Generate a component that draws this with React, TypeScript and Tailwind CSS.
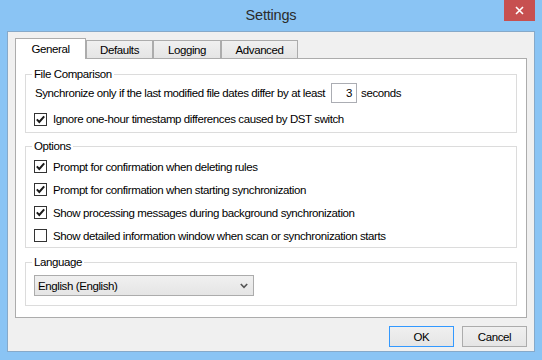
import React from "react";

const txt = "text-[11.5px] tracking-[-0.4px] text-black leading-[16px]";

function Check({ checked }: { checked: boolean }) {
  return (
    <div className="w-[13px] h-[13px] border border-[#333333] bg-white flex items-center justify-center shrink-0">
      {checked && (
        <svg width="11" height="11" viewBox="0 0 11 11">
          <path d="M1.8 5.4 L4.3 8 L9.2 2.4" fill="none" stroke="#1a1a1a" strokeWidth="2" />
        </svg>
      )}
    </div>
  );
}

function Row({ checked, label }: { checked: boolean; label: string }) {
  return (
    <div className="h-[23px] flex items-center">
      <Check checked={checked} />
      <span className={`${txt} ml-[6px]`}>{label}</span>
    </div>
  );
}

function Tab({ label, selected, w }: { label: string; selected?: boolean; w: string }) {
  if (selected) {
    return (
      <div
        className={`${w} h-[21px] -mb-px relative z-10 bg-white border border-b-0 border-[#acacac] flex items-center justify-center pb-[1px]`}
      >
        <span className={txt}>{label}</span>
      </div>
    );
  }
  return (
    <div
      className={`${w} h-[18px] bg-gradient-to-b from-[#f0f0f0] to-[#e5e5e5] border border-b-0 border-[#acacac] flex items-center justify-center`}
    >
      <span className={txt}>{label}</span>
    </div>
  );
}

export default function App() {
  return (
    <div className="w-[542px] h-[360px] bg-[#8ac4f4] flex flex-col px-[7px] pb-[8px] font-['Liberation_Sans',Arial,sans-serif] overflow-hidden">
      <div className="h-[31px] relative flex items-center justify-center shrink-0">
        <span className="text-[14.5px] text-[#2b2b2b] tracking-[-0.2px]">Settings</span>
        <div className="absolute right-0 top-0 w-[31px] h-[21px] bg-[#c75050] flex items-center justify-center">
          <svg width="9" height="9" viewBox="0 0 9 9">
            <path d="M1 1 L8 8 M8 1 L1 8" stroke="#ffffff" strokeWidth="1.6" />
          </svg>
        </div>
      </div>
      <div className="flex-1 border border-[#86a9c9] bg-[#f0f0f0] flex flex-col px-[7px] pt-[6px]">
        <div className="flex items-end h-[20px]">
          <Tab label="General" selected w="w-[71px]" />
          <Tab label="Defaults" w="w-[67px]" />
          <Tab label="Logging" w="w-[68px]" />
          <Tab label="Advanced" w="w-[77px]" />
        </div>
        <div className="h-[260px] bg-white border border-[#acacac] flex flex-col px-[9px]">
          <fieldset className="border border-[#dcdcdc] mt-[7px]">
            <legend className={`${txt} ml-[6px] px-[2px]`}>File Comparison</legend>
            <div className="px-[8px] flex flex-col pb-[3px]">
              <div className="h-[20px] flex items-center mt-[1px]">
                <span className={`${txt} ml-[1px]`}>
                  Synchronize only if the last modified file dates differ by at least
                </span>
                <div className="ml-[6px] w-[26px] h-[20px] border border-[#abadb3] bg-white flex items-center justify-end pr-[4px]">
                  <span className={txt}>3</span>
                </div>
                <span className={`${txt} ml-[4px]`}>seconds</span>
              </div>
              <div className="h-[20px] flex items-center mt-[6px]">
                <Check checked />
                <span className={`${txt} ml-[6px]`}>
                  Ignore one-hour timestamp differences caused by DST switch
                </span>
              </div>
            </div>
          </fieldset>
          <fieldset className="border border-[#dcdcdc] mt-[5px]">
            <legend className={`${txt} ml-[6px] px-[2px]`}>Options</legend>
            <div className="px-[8px] flex flex-col pt-[1px]">
              <Row checked label="Prompt for confirmation when deleting rules" />
              <Row checked label="Prompt for confirmation when starting synchronization" />
              <Row checked label="Show processing messages during background synchronization" />
              <Row checked={false} label="Show detailed information window when scan or synchronization starts" />
            </div>
          </fieldset>
          <fieldset className="border border-[#dcdcdc] mt-[6px]">
            <legend className={`${txt} ml-[6px] px-[2px]`}>Language</legend>
            <div className="px-[8px] pt-[5px] pb-[9px]">
              <div className="w-[220px] h-[21px] border border-[#acacac] bg-gradient-to-b from-[#f0f0f0] to-[#e5e5e5] flex items-center justify-between pl-[3px] pr-[5px]">
                <span className={txt}>English (English)</span>
                <svg width="8" height="6" viewBox="0 0 8 6">
                  <path d="M0.8 1 L4 4.4 L7.2 1" fill="none" stroke="#555555" strokeWidth="1.6" />
                </svg>
              </div>
            </div>
          </fieldset>
        </div>
        <div className="flex justify-end gap-[8px] mt-[8px]">
          <div className="w-[65px] h-[21px] border border-[#3399ff] bg-gradient-to-b from-[#f0f0f0] to-[#e5e5e5] flex items-center justify-center">
            <span className={txt}>OK</span>
          </div>
          <div className="w-[65px] h-[21px] border border-[#acacac] bg-gradient-to-b from-[#f0f0f0] to-[#e5e5e5] flex items-center justify-center">
            <span className={txt}>Cancel</span>
          </div>
        </div>
      </div>
    </div>
  );
}
